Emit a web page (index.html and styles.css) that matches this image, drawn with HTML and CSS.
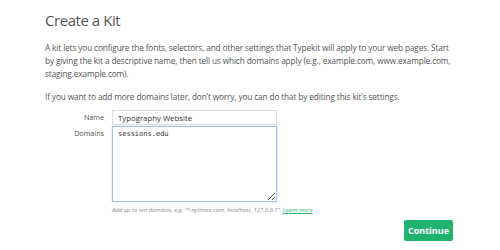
FILE: index.html
```html
<!DOCTYPE html>
<html lang="en">
<head>
<meta charset="UTF-8">
<title>Create a Kit</title>
<link rel="stylesheet" href="styles.css">
</head>
<body>
<main class="page">
  <h1>Create a Kit</h1>
  <p class="intro">A kit lets you configure the fonts, selectors, and other settings that Typekit will apply to your web pages. Start by giving the kit a descriptive name, then tell us which domains apply (e.g., example.com, www.example.com, staging.example.com).</p>
  <p class="intro">If you want to add more domains later, don’t worry, you can do that by editing this kit’s settings.</p>
  <form class="kit-form">
    <label for="kit-name">Name</label>
    <input id="kit-name" class="field" type="text" value="Typography Website">
    <label for="kit-domains">Domains</label>
    <div class="domains">
      <textarea id="kit-domains" class="field area">sessions.edu</textarea>
      <p class="help">Add up to ten domains, e.g. “*.nytimes.com, localhost, 127.0.0.1”. <a href="#">Learn more</a></p>
    </div>
  </form>
  <div class="actions"><button class="continue-btn">Continue</button></div>
</main>
</body>
</html>
```

FILE: styles.css
```css
body { margin:0; background:#fff; font-family:'Open Sans','Noto Sans',sans-serif; color:#555; }
.page { width:410px; margin-left:45px; padding-top:8px; }
h1 { font-size:15px; line-height:24px; font-weight:400; color:#555; margin:0 0 9px; letter-spacing:-0.45px; }
.intro { font-size:8.25px; line-height:13px; margin:0 0 10px; color:#555; letter-spacing:-0.12px; }
.kit-form { display:grid; grid-template-columns:59px 165px; column-gap:8px; row-gap:1px; margin-top:-3px; }
.kit-form label { text-align:right; font-size:7.2px; line-height:15px; color:#555; }
.field { box-sizing:border-box; width:165px; height:15px; border:1px solid #ddd; padding:0 5px; font-family:'Open Sans','Noto Sans',sans-serif; font-size:7.8px; color:#333; margin:0; outline:none; }
.area { display:block; height:76px; padding:3px 5px; border:1px solid #a4bff0; box-shadow:0 0 2px #c5d7f7; font-family:'DejaVu Sans Mono',monospace; font-size:7px; resize:vertical; }
.help { margin:4px 0 0; font-size:5.9px; font-style:italic; color:#888; white-space:nowrap; }
.help a { color:#2db36e; }
.actions { display:flex; justify-content:flex-end; margin-top:6px; padding-right:2px; }
.continue-btn { background:#1fb36f; color:#fff; border:none; border-radius:2px; width:49px; height:21px; font-family:'Open Sans','Noto Sans',sans-serif; font-weight:700; font-size:9px; padding:0; }
```
